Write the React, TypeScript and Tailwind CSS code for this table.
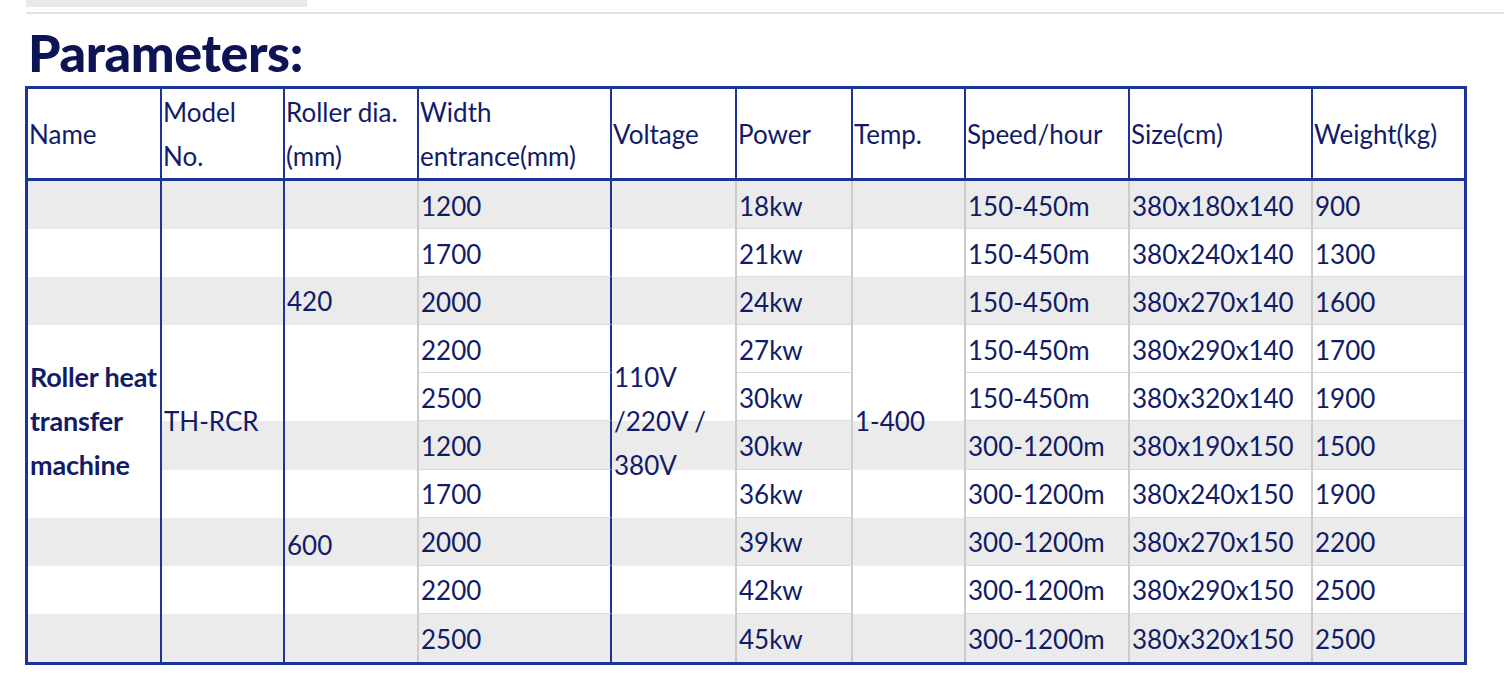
import React from "react";
import clsx from "clsx";

const colStart = [
  "col-start-1",
  "col-start-2",
  "col-start-3",
  "col-start-4",
  "col-start-5",
  "col-start-6",
  "col-start-7",
  "col-start-8",
  "col-start-9",
  "col-start-10",
];
const rowStart = [
  "row-start-1",
  "row-start-2",
  "row-start-3",
  "row-start-4",
  "row-start-5",
  "row-start-6",
  "row-start-7",
  "row-start-8",
  "row-start-9",
  "row-start-10",
  "row-start-11",
];

const headers: React.ReactNode[] = [
  "Name",
  <>Model<br />No.</>,
  <>Roller dia.<br />(mm)</>,
  <>Width<br />entrance(mm)</>,
  "Voltage",
  "Power",
  "Temp.",
  "Speed/hour",
  "Size(cm)",
  "Weight(kg)",
];

const rows = [
  { w: "1200", p: "18kw", s: "150-450m", z: "380x180x140", g: "900" },
  { w: "1700", p: "21kw", s: "150-450m", z: "380x240x140", g: "1300" },
  { w: "2000", p: "24kw", s: "150-450m", z: "380x270x140", g: "1600" },
  { w: "2200", p: "27kw", s: "150-450m", z: "380x290x140", g: "1700" },
  { w: "2500", p: "30kw", s: "150-450m", z: "380x320x140", g: "1900" },
  { w: "1200", p: "30kw", s: "300-1200m", z: "380x190x150", g: "1500" },
  { w: "1700", p: "36kw", s: "300-1200m", z: "380x240x150", g: "1900" },
  { w: "2000", p: "39kw", s: "300-1200m", z: "380x270x150", g: "2200" },
  { w: "2200", p: "42kw", s: "300-1200m", z: "380x290x150", g: "2500" },
  { w: "2500", p: "45kw", s: "300-1200m", z: "380x320x150", g: "2500" },
];

const grayRows = [true, false, true, false, false, true, false, true, false, true];
// right border colour per column in data rows
const blueRight = [true, true, false, true, false, false, false, false, false, false];
const lined = [false, false, false, true, false, true, false, true, true, true];

function cellText(r: (typeof rows)[number], c: number): string {
  if (c === 3) return r.w;
  if (c === 5) return r.p;
  if (c === 7) return r.s;
  if (c === 8) return r.z;
  if (c === 9) return r.g;
  return "";
}

export default function App() {
  return (
    <div className="min-h-[688px] w-[1504px] bg-white font-['Lato','Noto_Sans',sans-serif] text-[#121b68]">
      <div className="ml-[26px] h-[7px] w-[281px] bg-[#e9e9e9]" />
      <div className="ml-[26px] mt-[5px] h-[2px] bg-[#e3e3e3]" />
      <h1 className="mt-[12px] pl-[28px] text-[52px] font-black leading-[52px] tracking-[-0.4px] text-[#0c1453]">
        Parameters:
      </h1>
      <div className="ml-[25px] mt-[8px] w-[1442px] border-[3px] border-[#1a3596]">
        <div className="grid grid-cols-[134px_123px_134px_193px_125px_116px_113px_164px_183px_151px] grid-rows-[92px_repeat(10,48.1px)] text-[26px] leading-[44px]">
          {headers.map((h, c) => (
            <div
              key={"h" + c}
              className={clsx(
                colStart[c],
                rowStart[0],
                "flex items-center border-b-[3px] border-[#1a3596] pl-[1px]",
                c < 9 && "border-r-2"
              )}
            >
              <div>{h}</div>
            </div>
          ))}
          {rows.map((r, i) =>
            Array.from({ length: 10 }).map((_, c) => {
              const gray = grayRows[i] && !(c === 0 && i >= 3 && i <= 6);
              return (
                <div
                  key={i + "-" + c}
                  className={clsx(
                    colStart[c],
                    rowStart[i + 1],
                    "flex items-center pl-[2px] pt-[2px]",
                    gray ? "bg-[#ebebeb]" : "bg-white",
                    c < 9 && "border-r-2",
                    c < 9 && (blueRight[c] ? "border-r-[#1a3596]" : "border-r-[#cccccc]"),
                    lined[c] && i < 9 && "border-b border-b-[#d9d9d9]"
                  )}
                >
                  {cellText(r, c)}
                </div>
              );
            })
          )}
          <div className="col-start-1 row-start-2 row-span-10 flex items-center pl-[2px] text-[27px] font-bold tracking-[-0.2px]">
            <div>
              Roller heat
              <br />
              transfer
              <br />
              machine
            </div>
          </div>
          <div className="col-start-2 row-start-2 row-span-10 flex items-center pl-[2px]">TH-RCR</div>
          <div className="col-start-3 row-start-2 row-span-5 flex items-center pl-[2px]">420</div>
          <div className="col-start-3 row-start-7 row-span-5 flex items-center pl-[2px] pt-[6px]">600</div>
          <div className="col-start-5 row-start-2 row-span-10 flex items-center pl-[2px]">
            <div>
              110V
              <br />
              /220V /
              <br />
              380V
            </div>
          </div>
          <div className="col-start-7 row-start-2 row-span-10 flex items-center pl-[2px]">1-400</div>
        </div>
      </div>
    </div>
  );
}
